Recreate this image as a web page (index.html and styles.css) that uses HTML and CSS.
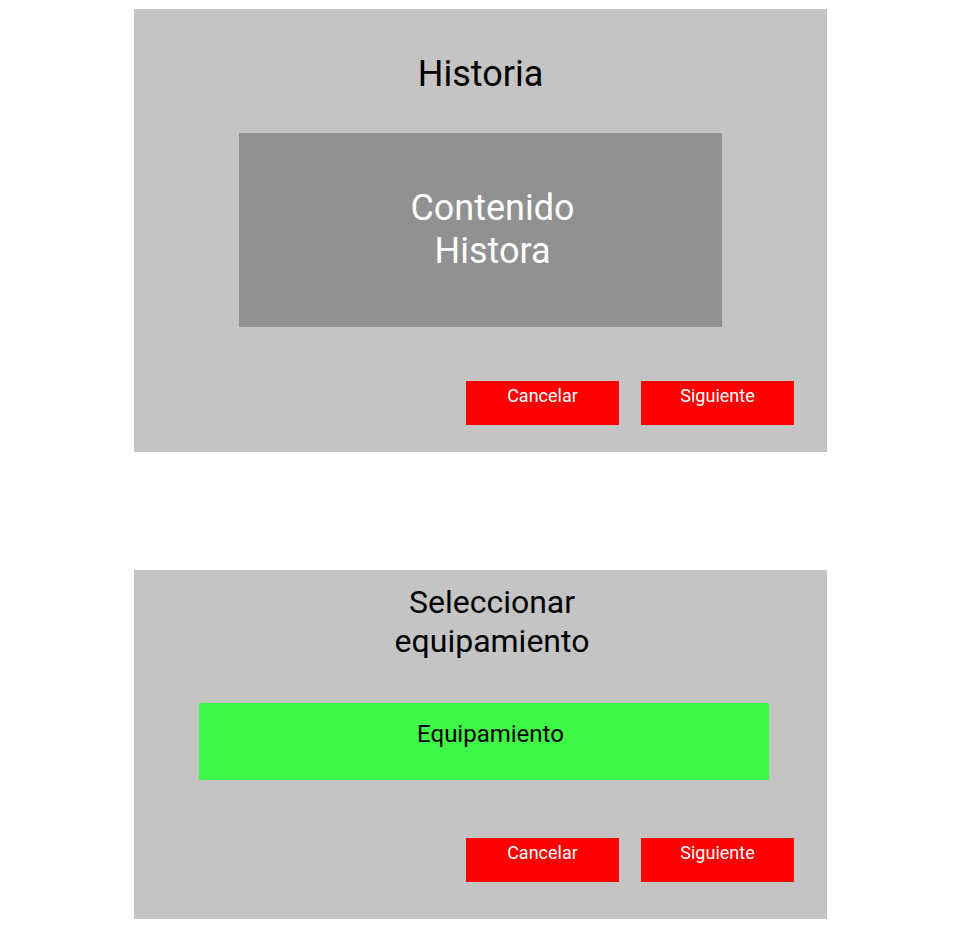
FILE: index.html
```html
<html>
<head>
<meta charset="utf-8">
<link rel="stylesheet" href="styles.css">
</head>
<body>
<div id="container">
<div class="screen" id="history">
	<div class="title">Historia</div>
	<div class="content">Contenido<br>Histora</div>
	<div class="actions">
		<div class="button">Cancelar</div>
		<div class="button">Siguiente</div>
	</div>
</div>
<div class="screen" id="equip">
	<div class="title">Seleccionar<br>equipamiento</div>
	<div class="equipList">Equipamiento</div>
	<div class="actions">
		<div class="button">Cancelar</div>
		<div class="button">Siguiente</div>
	</div>
</div>
</div>
</body>
</html>
```

FILE: styles.css
```css
body
{
	margin: 0px;
	background-color: #ffffff;
	font-family: Roboto, "Liberation Sans", sans-serif;
}
#container
{
	display: flex;
	flex-direction: column;
	align-items: center;
	gap: 118px;
	padding-top: 9px;
	padding-right: 1px;
}
.screen
{
	width: 693px;
	background-color: #c4c4c4;
	display: flex;
	flex-direction: column;
	box-sizing: border-box;
}
#history
{
	height: 443px;
	padding-top: 44px;
}
#equip
{
	height: 349px;
	padding-top: 13px;
}
.title
{
	text-align: center;
	color: #000000;
}
#history .title
{
	font-size: 36px;
	line-height: 42px;
}
#equip .title
{
	font-size: 32px;
	line-height: 39px;
	padding-left: 23px;
}
.content
{
	width: 483px;
	height: 194px;
	margin: 38px auto 0px auto;
	background-color: #919191;
	color: #ffffff;
	font-size: 36px;
	line-height: 43px;
	text-align: center;
	display: flex;
	align-items: center;
	justify-content: center;
	padding-left: 24px;
	box-sizing: border-box;
}
.equipList
{
	width: 570px;
	height: 77px;
	margin: 42px 0px 0px 65px;
	background-color: #3ff747;
	color: #000000;
	font-size: 24px;
	line-height: 28px;
	text-align: center;
	padding-top: 17px;
	padding-left: 13px;
	box-sizing: border-box;
}
.actions
{
	display: flex;
	justify-content: flex-end;
	gap: 22px;
	padding-right: 33px;
}
#history .actions
{
	margin-top: 54px;
}
#equip .actions
{
	margin-top: 58px;
}
.button
{
	width: 153px;
	height: 44px;
	background-color: #ff0000;
	color: #ffffff;
	font-size: 18px;
	line-height: 21px;
	text-align: center;
	padding-top: 4px;
	box-sizing: border-box;
}
```
